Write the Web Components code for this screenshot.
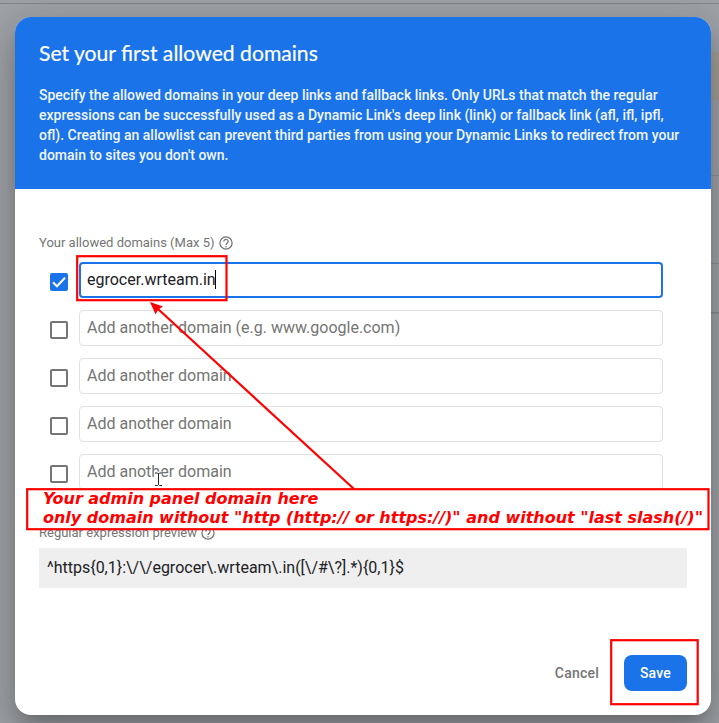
<!DOCTYPE html>
<html lang="en">
<head>
<meta charset="utf-8">
<title>Set your first allowed domains</title>
<style>
html, body { margin: 0; height: 723px; overflow: hidden; }
body { font-family: Roboto, "Liberation Sans", sans-serif; -webkit-font-smoothing: antialiased; }
</style>
</head>
<body>
<page-backdrop>
  <domain-dialog>
    <dialog-header slot="header" heading="Set your first allowed domains">Specify the allowed domains in your deep links and fallback links. Only URLs that match the regular<br>expressions can be successfully used as a Dynamic Link's deep link (link) or fallback link (afl, ifl, ipfl,<br>ofl). Creating an allowlist can prevent third parties from using your Dynamic Links to redirect from your<br>domain to sites you don't own.</dialog-header>
    <field-label>Your allowed domains (Max 5)</field-label>
    <domain-list>
      <domain-row checked>egrocer.wrteam.in</domain-row>
      <domain-row>Add another domain (e.g. www.google.com)</domain-row>
      <domain-row>Add another domain</domain-row>
      <domain-row>Add another domain</domain-row>
      <domain-row>Add another domain</domain-row>
    </domain-list>
    <regex-preview>
      <field-label slot="label">Regular expression preview</field-label>
      ^https{0,1}:\/\/egrocer\.wrteam\.in([\/#\?].*){0,1}$
    </regex-preview>
    <dialog-button slot="actions">Cancel</dialog-button>
    <dialog-button slot="actions" primary>Save</dialog-button>
  </domain-dialog>
  <annotation-layer slot="overlay">
    <span slot="first">Your admin panel domain here</span>
    <span slot="second">only domain without "http (http:// or https://)" and without "last slash(/)"</span>
  </annotation-layer>
</page-backdrop>
<script>
const define = (name, html, setup) => customElements.define(name, class extends HTMLElement {
  constructor() {
    super();
    this.attachShadow({ mode: "open" }).innerHTML = html;
  }
  connectedCallback() { if (setup) setup(this, this.shadowRoot); }
});

define("page-backdrop", `<style>
:host { display: block; position: relative; width: 719px; height: 723px; overflow: hidden; background: #9fa2a7; box-sizing: border-box; padding: 17px 8px 8px 15px; }
.scene { position: absolute; inset: 0; display: block; }
.content { position: relative; }
</style>
<svg class="scene" width="719" height="723">
<rect y="3" width="719" height="1" fill="#82868c"/>
<rect x="708" y="52" width="11" height="48" fill="#a59e94"/>
<rect x="708" y="175" width="11" height="1" fill="#8f9398"/>
<rect x="708" y="263" width="11" height="1" fill="#8b8e93"/>
<rect x="708" y="312" width="11" height="1" fill="#858990"/>
<rect x="708" y="313" width="11" height="1" fill="#92969a"/>
</svg>
<div class="content"><slot></slot></div><slot name="overlay"></slot>`);

define("domain-dialog", `<style>
:host { display: flex; flex-direction: column; width: 696px; height: 698px; border-radius: 16px; overflow: hidden; background: #fff;
 box-shadow: 0 11px 15px -7px rgba(0,0,0,.2), 0 24px 38px 3px rgba(0,0,0,.14), 0 9px 46px 8px rgba(0,0,0,.12); }
main { flex: 1; padding: 45px 24px 0; }
footer { display: flex; justify-content: flex-end; gap: 8px; padding: 0 24px 24px; }
</style><slot name="header"></slot><main><slot></slot></main><footer><slot name="actions"></slot></footer>`);

define("dialog-header", `<style>
:host { display: block; height: 172px; box-sizing: border-box; padding: 22px 24px 0; background: #1a73e8; color: #fff; }
h1 { margin: 0 0 18px; font: 400 21.15px/28px Lato, "Open Sans", sans-serif; -webkit-text-stroke: .2px #fff; white-space: nowrap; }
p { margin: 0; font-size: 14px; line-height: 20px; font-weight: 500; color: #f1f6fe; white-space: nowrap; }
</style><h1></h1><p><slot></slot></p>`, (h, r) => r.querySelector("h1").textContent = h.getAttribute("heading"));

define("field-label", `<style>
:host { display: flex; align-items: center; gap: 5px; height: 18px; font-size: 13px; line-height: 18px; color: #757575; white-space: nowrap; }
svg { display: block; margin-left: -.5px; }
</style><span><slot></slot></span><svg width="14" height="14" viewBox="0 0 14 14" fill="none" stroke="#757575" stroke-width="1.25"><circle cx="7" cy="7" r="6.1"/><path d="M4.8 5.5a2.15 2.15 0 1 1 3.6 1.55C7.65 7.7 7 8 7 9.1"/><path d="M7 9.9v1.35" stroke-width="1.4"/></svg>`);

define("domain-list", `<style>:host { display: grid; gap: 12px; padding: 10px 0 0 11px; }</style><slot></slot>`);

define("domain-row", `<style>
:host { display: flex; gap: 11px; height: 36px; }
.check { flex: none; width: 18px; height: 18px; margin-top: 11px; box-sizing: border-box; border: 2px solid #757575; border-radius: 2px; }
.check svg { display: none; }
.field { width: 584px; height: 36px; box-sizing: border-box; border: 1px solid #e0e0e0; border-radius: 4px; padding: 0 7px; display: flex; font-size: 16px; line-height: 33px; color: #757575; white-space: nowrap; }
:host([checked]) .check { background: #1a73e8; border: 0; }
:host([checked]) .check svg { display: block; }
:host([checked]) .field { border: 2px solid #1a73e8; padding: 0 6px; line-height: 31px; color: #202124; }
.caret { display: none; width: 1px; height: 19px; margin: 6px 0 0 -1px; background: #000; }
:host([checked]) .caret { display: block; }
</style><div class="check"><svg width="18" height="18" viewBox="0 0 18 18" fill="none" stroke="#fff" stroke-width="2"><path d="M3 9.2l4 4L15 4.8"/></svg></div><div class="field"><slot></slot><i class="caret"></i></div>`);

define("regex-preview", `<style>
:host { display: block; padding-top: 34px; }
.code { height: 40px; margin-top: 6px; padding: 0 8px; box-sizing: border-box; background: #efefef; font-size: 16px; line-height: 39px; color: #202124; white-space: nowrap; }
</style><slot name="label"></slot><div class="code"><slot></slot></div>`);

define("dialog-button", `<style>
:host { display: block; height: 36px; line-height: 36px; padding: 0 16px; border-radius: 8px; font-size: 14px; font-weight: 500; letter-spacing: .2px; color: #757575; }
:host(:not([primary])) { padding-right: 17px; }
:host([primary]) { background: #1a73e8; color: #fff; }
</style><slot></slot>`);

define("annotation-layer", `<style>
:host { position: absolute; inset: 0; font: italic 700 16px/19px "DejaVu Sans", sans-serif; letter-spacing: -.01px; color: #f00; }
svg { position: absolute; inset: 0; }
.note { position: absolute; left: 26px; top: 488px; width: 684px; height: 42px; box-sizing: border-box; padding: 1px 0 0 17px; white-space: nowrap; }
.note div { height: 19px; }
</style>
<svg width="719" height="723" fill="none" stroke="#f00" stroke-width="2.2">
<path d="M353.5 488.5L158 309"/>
<path d="M150 302l13 4.6-4.8 3-2.6 5z" fill="#f00" stroke="none"/>
<rect x="77.2" y="256.2" width="149.3" height="44"/>
<rect x="27.2" y="489.2" width="681.3" height="40" fill="#fff"/>
<rect x="611.2" y="640.2" width="86.5" height="64"/>
<g transform="translate(-.5 -1.5)">
<path d="M155.5 474.5h2.5l1 1 1-1h2.5M159 475v11M155.5 487h2.5l1-1 1 1h2.5" stroke="#fff" stroke-width="3"/>
<path d="M155.5 474.5h2.5l1 1 1-1h2.5M159 475v11M155.5 487h2.5l1-1 1 1h2.5" stroke="#222" stroke-width="1"/>
</g>
</svg>
<div class="note"><div><slot name="first"></slot></div><div><slot name="second"></slot></div></div>`);
</script>
</body>
</html>
